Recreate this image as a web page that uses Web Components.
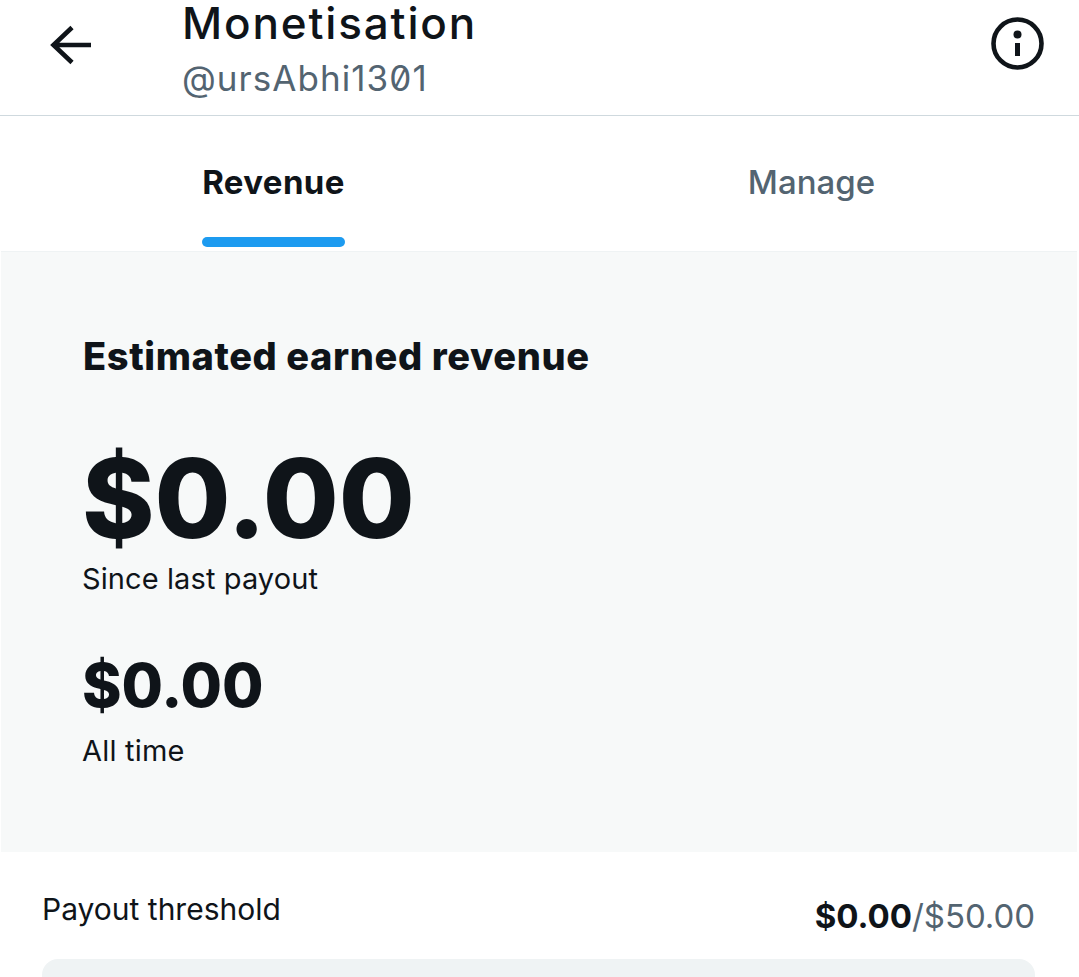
<!DOCTYPE html>
<html>
<head>
<meta charset="utf-8">
<title>Monetisation</title>
<style>
  html, body { margin: 0; background: #fff; }
  body { font-family: Inter, "Liberation Sans", sans-serif; color: #0f1419; width: 1079px; height: 977px; overflow: hidden; }
</style>
</head>
<body>
<mon-header title-text="Monetisation" handle="@ursAbhi1301"></mon-header>
<mon-tabs>
  <mon-tab active>Revenue</mon-tab>
  <mon-tab>Manage</mon-tab>
</mon-tabs>
<revenue-panel heading="Estimated earned revenue">
  <money-stat size="big" amount="$0.00" label="Since last payout"></money-stat>
  <money-stat amount="$0.00" label="All time"></money-stat>
</revenue-panel>
<payout-threshold current="$0.00" target="$50.00"></payout-threshold>

<script>
/**
 * Top bar with back arrow, title and info button.
 */
customElements.define('mon-header',
  class extends HTMLElement {
    constructor () {
      super()
      this.attachShadow({ mode: 'open' })
      this.shadowRoot.innerHTML = `
        <style>
          :host { display: flex; align-items: flex-start; height: 115px; border-bottom: 1px solid #cfd9de; box-sizing: content-box; }
          .back { flex: none; width: 182px; padding: 24px 0 0 49px; box-sizing: border-box; }
          .back svg, .info svg { display: block; }
          .titles { flex: 1; min-width: 0; padding-top: 1px; }
          .title { font-size: 44px; line-height: 44px; font-weight: 500; letter-spacing: 1.85px; }
          .handle { font-size: 35px; line-height: 42px; margin-top: 12px; color: #536471; letter-spacing: 1.05px; font-feature-settings: "zero" 1; }
          .info { flex: none; padding: 17px 35px 0 0; }
        </style>
        <div class="back">
          <svg width="44" height="42" viewBox="0 0 44 42" fill="none" stroke="#0f1419" stroke-width="4.6">
            <path d="M42 21H5M23 3.5 4.5 21 23 38.5"/>
          </svg>
        </div>
        <div class="titles">
          <div class="title"></div>
          <div class="handle"></div>
        </div>
        <div class="info">
          <svg width="53" height="53" viewBox="0 0 53 53">
            <circle cx="26.5" cy="26.5" r="24" fill="none" stroke="#0f1419" stroke-width="4.6"/>
            <circle cx="26.5" cy="17.5" r="4" fill="#0f1419"/>
            <rect x="24" y="26" width="5" height="13" fill="#0f1419"/>
          </svg>
        </div>`
      this.shadowRoot.querySelector('.title').textContent = this.getAttribute('title-text')
      this.shadowRoot.querySelector('.handle').textContent = this.getAttribute('handle')
    }
  }
)

/**
 * Tab strip, two equal halves.
 */
customElements.define('mon-tabs',
  class extends HTMLElement {
    constructor () {
      super()
      this.attachShadow({ mode: 'open' })
      this.shadowRoot.innerHTML = `
        <style>
          :host { display: grid; grid-template-columns: 547px 529px; height: 136px; }
        </style>
        <slot></slot>`
    }
  }
)

customElements.define('mon-tab',
  class extends HTMLElement {
    constructor () {
      super()
      this.attachShadow({ mode: 'open' })
      this.shadowRoot.innerHTML = `
        <style>
          :host { display: flex; justify-content: center; color: #536471; font-size: 33px; font-weight: 500; line-height: 40px; padding-top: 46px; box-sizing: border-box; }
          :host([active]) { color: #0f1419; font-weight: 700; letter-spacing: 0.4px; }
          .label { position: relative; display: block; }
          :host([active]) .label::after { content: ""; position: absolute; left: 0; right: 0; top: 75px; height: 10px; border-radius: 5px; background: #1d9bf0; }
        </style>
        <span class="label"><slot></slot></span>`
    }
  }
)

/**
 * Grey panel holding the revenue figures.
 */
customElements.define('revenue-panel',
  class extends HTMLElement {
    constructor () {
      super()
      this.attachShadow({ mode: 'open' })
      this.shadowRoot.innerHTML = `
        <style>
          :host { display: block; height: 600px; margin: 0 2px 0 1px; padding: 82px 0 0 81px; box-sizing: border-box; background: #f7f9f9; box-shadow: 0 -1px 0 #eff3f4; }
          h2 { margin: 0 0 65px 1px; font-size: 38px; line-height: 44px; font-weight: 800; letter-spacing: 0.6px; }
        </style>
        <h2></h2>
        <slot></slot>`
      this.shadowRoot.querySelector('h2').textContent = this.getAttribute('heading')
    }
  }
)

customElements.define('money-stat',
  class extends HTMLElement {
    constructor () {
      super()
      this.attachShadow({ mode: 'open' })
      this.shadowRoot.innerHTML = `
        <style>
          :host { display: block; margin-bottom: 52px; }
          .amount { font-size: 60px; line-height: 72px; font-weight: 800; }
          .label { font-size: 29px; line-height: 36px; margin-top: 12px; letter-spacing: 0.2px; }
          :host([size="big"]) .amount { font-size: 110px; line-height: 110px; }
          :host([size="big"]) .label { margin-top: 8px; letter-spacing: 0.1px; }
        </style>
        <div class="amount"></div>
        <div class="label"></div>`
      this.shadowRoot.querySelector('.amount').textContent = this.getAttribute('amount')
      this.shadowRoot.querySelector('.label').textContent = this.getAttribute('label')
    }
  }
)

/**
 * Payout threshold row and the progress track under it.
 */
customElements.define('payout-threshold',
  class extends HTMLElement {
    constructor () {
      super()
      this.attachShadow({ mode: 'open' })
      this.shadowRoot.innerHTML = `
        <style>
          :host { display: block; padding: 39px 44px 0 42px; }
          .row { display: flex; justify-content: space-between; align-items: flex-start; height: 68px; }
          .name { font-size: 30px; line-height: 36px; }
          .value { font-size: 33px; line-height: 46px; margin-top: 2px; color: #536471; letter-spacing: -0.05px; }
          .value b { color: #0f1419; font-weight: 700; }
          .track { height: 36px; border-radius: 16px; background: #eff3f4; }
        </style>
        <div class="row">
          <span class="name">Payout threshold</span>
          <span class="value"><b></b>/<span class="target"></span></span>
        </div>
        <div class="track"></div>`
      this.shadowRoot.querySelector('b').textContent = this.getAttribute('current')
      this.shadowRoot.querySelector('.target').textContent = this.getAttribute('target')
    }
  }
)
</script>
</body>
</html>
